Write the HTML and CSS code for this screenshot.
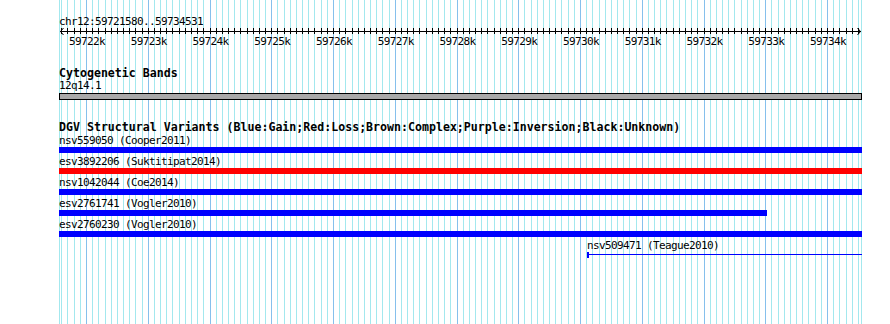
FILE: index.html
```html
<!DOCTYPE html>
<html>
<head>
<meta charset="utf-8">
<link rel="stylesheet" href="styles.css">
</head>
<body>
<div class="canvas">
  <svg class="grid" width="890" height="324" shape-rendering="crispEdges">
    <line x1="61.31" y1="162" x2="861" y2="162" class="grid-minor" stroke-width="324" stroke-dasharray="1 5.175"/>
    <line x1="86.01" y1="162" x2="861" y2="162" class="grid-major" stroke-width="324" stroke-dasharray="1 60.75"/>
    <rect x="59" y="0" width="1" height="324" class="grid-edge"/>
    <rect x="861" y="0" width="1" height="324" class="grid-edge"/>
  </svg>
  <div class="panel">
    <section class="ruler-track">
      <div class="chr">chr12:59721580..59734531</div>
      <svg class="ruler" width="803" height="20" viewBox="59 28 803 20">
        <line x1="60" y1="31.5" x2="861" y2="31.5" class="axis" shape-rendering="crispEdges"/>
        <line x1="61.31" y1="31" x2="861" y2="31" class="ticks" stroke-width="6" stroke-dasharray="1 5.175" shape-rendering="crispEdges"/>
        <polyline points="63.5,28 60.5,31.5 63.5,35" class="arrow"/>
        <polyline points="857.5,28 860.5,31.5 857.5,35" class="arrow"/>
        <g class="ruler-labels">
          <text x="87" y="45">59722k</text>
          <text x="148.75" y="45">59723k</text>
          <text x="210.5" y="45">59724k</text>
          <text x="272.25" y="45">59725k</text>
          <text x="334" y="45">59726k</text>
          <text x="395.75" y="45">59727k</text>
          <text x="457.5" y="45">59728k</text>
          <text x="519.25" y="45">59729k</text>
          <text x="581" y="45">59730k</text>
          <text x="642.75" y="45">59731k</text>
          <text x="704.5" y="45">59732k</text>
          <text x="766.25" y="45">59733k</text>
          <text x="828" y="45">59734k</text>
        </g>
      </svg>
    </section>

    <section class="track cyto">
      <h2 class="track-title">Cytogenetic Bands</h2>
      <div class="feat-label">12q14.1</div>
      <div class="band"></div>
    </section>

    <section class="track dgv">
      <h2 class="track-title">DGV Structural Variants (Blue:Gain;Red:Loss;Brown:Complex;Purple:Inversion;Black:Unknown)</h2>
      <div class="row">
        <div class="feat-label">nsv559050 (Cooper2011)</div>
        <div class="bar gain"></div>
      </div>
      <div class="row">
        <div class="feat-label">esv3892206 (Suktitipat2014)</div>
        <div class="bar loss"></div>
      </div>
      <div class="row">
        <div class="feat-label">nsv1042044 (Coe2014)</div>
        <div class="bar gain"></div>
      </div>
      <div class="row">
        <div class="feat-label">esv2761741 (Vogler2010)</div>
        <div class="bar gain" style="width:708px"></div>
      </div>
      <div class="row">
        <div class="feat-label">esv2760230 (Vogler2010)</div>
        <div class="bar gain"></div>
      </div>
      <div class="row" style="margin-left:528px">
        <div class="feat-label">nsv509471 (Teague2010)</div>
        <div class="span-feature"></div>
      </div>
    </section>
  </div>
</div>
</body>
</html>
```
FILE: styles.css
```css
* {
  box-sizing: border-box;
}

body {
  margin: 0;
  background: #ffffff;
}

.canvas {
  position: relative;
  width: 890px;
  height: 324px;
  overflow: hidden;
  background: #ffffff;
  font-family: "DejaVu Sans Mono", "Liberation Mono", monospace;
  color: #000000;
}

.grid {
  position: absolute;
  left: 0;
  top: 0;
}

.grid-minor {
  stroke: #a3e8ee;
}

.grid-major {
  stroke: #86c0ec;
}

.grid-edge {
  fill: #a3e8ee;
}

.panel {
  position: relative;
  margin-left: 59px;
  width: 803px;
  padding-top: 16px;
}

.chr,
.feat-label {
  font-size: 11px;
  line-height: 12px;
  height: 12px;
  letter-spacing: -0.62px;
  white-space: nowrap;
}

.ruler {
  display: block;
  overflow: visible;
}

.axis {
  stroke: #000000;
  stroke-width: 1;
}

.ticks {
  stroke: #000000;
}

.arrow {
  fill: none;
  stroke: #000000;
  stroke-width: 1;
}

.ruler-labels text {
  font-family: "DejaVu Sans Mono", "Liberation Mono", monospace;
  font-size: 11px;
  letter-spacing: -0.62px;
  text-anchor: middle;
  fill: #000000;
}

.track-title {
  margin: 0;
  font-size: 11.6px;
  font-weight: bold;
  line-height: 12px;
  height: 12px;
  white-space: nowrap;
}

.cyto {
  margin-top: 19px;
}

.cyto .track-title {
  margin-bottom: 1px;
}

.band {
  margin-top: 1px;
  height: 7px;
  border: 1px solid #000000;
  background: #a9a9a9;
}

.dgv {
  margin-top: 21px;
}

.dgv .track-title {
  margin-bottom: 2px;
}

.row {
  margin-bottom: 3px;
}

.bar {
  height: 6px;
  background: #0000ff;
}

.bar.loss {
  background: #ff0000;
}

.span-feature {
  position: relative;
  height: 6px;
}

.span-feature::before {
  content: "";
  position: absolute;
  left: 0;
  top: 0;
  width: 2px;
  height: 6px;
  background: #0000ff;
}

.span-feature::after {
  content: "";
  position: absolute;
  left: 0;
  right: 0;
  top: 2px;
  height: 1px;
  background: #0000ff;
}
```
